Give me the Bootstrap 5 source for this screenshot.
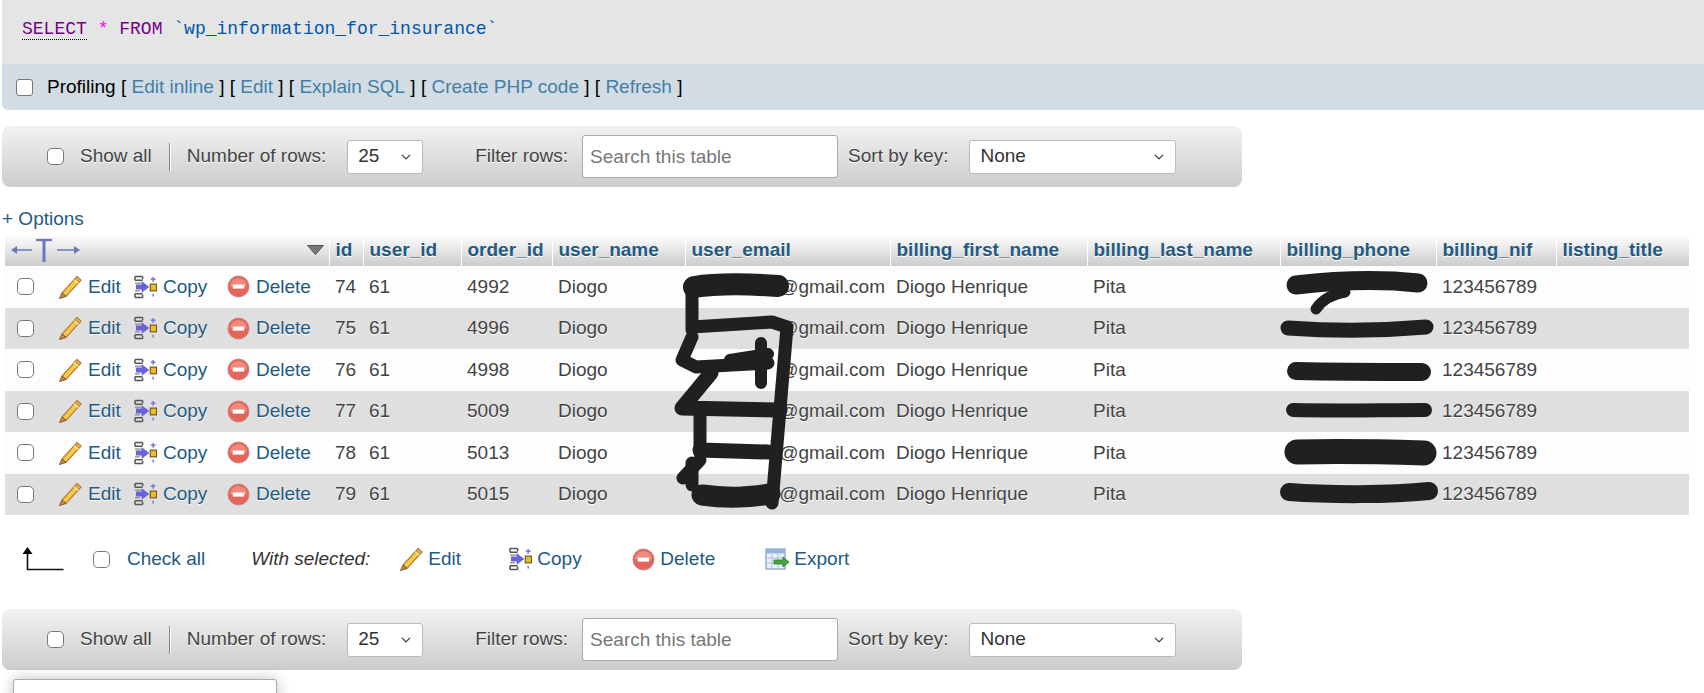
<!DOCTYPE html>
<html lang="en">
<head>
<meta charset="utf-8">
<title>wp_information_for_insurance</title>
<link href="https://cdn.jsdelivr.net/npm/bootstrap@5.3.0/dist/css/bootstrap.min.css" rel="stylesheet">
<style>
html,body{height:693px;overflow:hidden;background:#fff}
body{font-family:"Liberation Sans",Arial,sans-serif;font-size:19px;color:#444;position:relative}
a{color:#235a81;text-decoration:none}
.sqlbox{margin-left:2px;height:64px;background:#e5e5e5;padding:18px 0 0 20px;font-family:"Liberation Mono",monospace;font-size:18px;line-height:22px;color:#000}
.kw{color:#708;border-bottom:1px dotted #000}
.kw2{color:#708}.op{color:#f0f}.str{color:#05a}
.profbar{margin-left:2px;height:46px;background:#d3dce3;border-radius:0 0 0 6px;padding-left:14px;color:#000}
.profbar a{color:#3f7fa8}
.profbar .form-check-input,.chk{width:17px;height:17px;margin:0;border:1px solid #767676;border-radius:3px;flex:none}
.profbar .form-check-input{margin-right:14px}
.navbox{margin-left:2px;width:1240px;height:61px;background:linear-gradient(#f2f2f2,#ccc);border-radius:8px;color:#444;text-shadow:0 1px 0 #fff;padding-left:45px}
.first{margin-top:16px}
.second{margin-top:28px}
.sepr{width:1px;height:28px;background:#888;box-shadow:1px 0 0 #fff;margin:0 17px 0 17px}
.navbox .form-select{padding:0 0 0 10px;font-size:19px;height:34px;color:#333;border-color:#bbb;border-radius:3px;text-shadow:none;background-position:right 9px center;background-size:14px 10px}
.sel-n{width:76px;margin-left:21px}
.sel-k{width:207px;margin-left:21px}
.navbox .form-control{width:256px;height:43px;padding:0 7px;font-size:19px;margin-left:14px;border-color:#aaa;border-radius:3px;text-shadow:none}
.navbox .form-control::placeholder{color:#777}
.lbl-filter{margin-left:52px}
.lbl-sort{margin-left:10px}
.showlbl{margin-left:16px}
.optlink{margin:17px 0 0 2px;height:30px;line-height:30px;font-size:19px;display:block;color:#235a81}
.datatbl{table-layout:fixed;width:1684px;margin:0 0 0 5px;border-collapse:collapse;font-size:19px}
.datatbl th,.datatbl td{padding:0 0 0 6px;border:0;white-space:nowrap;box-shadow:none;vertical-align:middle;overflow:visible}
.datatbl th{height:32px;background:linear-gradient(#fff,#ccc);color:#235a81;font-weight:700;text-shadow:0 1px 0 #fff;border-left:1px solid #fff}
.datatbl th:first-child{border-left:0;padding:0}
.datatbl td{height:41.5px;color:#444;text-shadow:0 1px 0 #fff}
.datatbl tbody tr:nth-child(odd) td{background:#fdfdfd}
.datatbl tbody tr:nth-child(even) td{background:#dfdfdf}
.datatbl td.emailcell{text-align:right;padding-right:5px}
.datatbl td.actions{padding:0}
.w0{width:324px}.w1{width:34px}.w2{width:98px}.w3{width:91px}.w4{width:133px}.w5{width:205px}.w6{width:197px}.w7{width:193px}.w8{width:156px}.w9{width:120px}.w10{width:133px}
.acts{padding-left:12px}
.acts a{display:flex;align-items:center;gap:6px;color:#235a81}
.ic1{margin-left:24px;width:76px}
.ic2{width:93px}
.ic1 svg,.ic2 svg,.ic3 svg{flex:none}
.headwrap{display:flex;align-items:center;justify-content:space-between;padding:0 5px 0 6px}
.bulk{margin-top:22px;height:44px;padding-left:22px}
.bulkchk{margin-left:29px}
.bulk .chk{margin-right:17px}
.bulk .mute{font-style:italic;color:#333;margin-left:46px;margin-right:29px}
.bulk a{display:flex;align-items:center;gap:5px}
.checklink{color:#235a81}
.bk1{width:110px}.bk2{width:123px}.bk3{width:133px}
.consolebox{position:absolute;left:13px;top:679px;width:264px;height:40px;background:#fff;border:1px solid #aaa;border-radius:3px;box-shadow:0 0 14px rgba(0,0,0,.25)}
.scrib{position:absolute;left:0;top:0;pointer-events:none}
.scrib path{fill:none;stroke:#202020;stroke-linecap:round;stroke-linejoin:round}
</style>
</head>
<body>
<svg width="0" height="0" class="position-absolute">
<defs>
<symbol id="i-pencil" viewBox="0 0 24 24">
<path d="M19 1.5 L23 5 L8 21.5 L4 18Z" fill="#f4c94d" stroke="#b5812d" stroke-width="1.2"/>
<path d="M16.5 4.5 L20.5 8" stroke="#fbe89a" stroke-width="2.2"/>
<path d="M19 1.5 L23 5 L21 7.2 L17 3.7Z" fill="#e5a468" stroke="#b5812d" stroke-width="1"/>
<path d="M4 18 L8 21.5 L1.5 23.5Z" fill="#c98a4e" stroke="#8a5a2a" stroke-width="1"/>
</symbol>
<symbol id="i-copy" viewBox="0 0 24 24">
<path d="M1 0.5h9v23H1z" fill="#fff" opacity="0"/>
<path d="M1 1h8M1 5h8M1 19h8M1 23h8M1 1v4M1 19v4M9 1v3M9 20v3" stroke="#555" stroke-width="1.6" fill="none"/>
<path d="M1 8h7M1 16h5" stroke="#888" stroke-width="1.4"/>
<path d="M16 12 l-8 -6 v3.5 h-6 v5 h6 v3.5z" fill="#6a62d8" transform="translate(0,0)"/>
<rect x="17" y="9" width="6.5" height="7" fill="#f1b92e" stroke="#6b5a1c" stroke-width="1.2"/>
<path d="M20 1.5v5M17.5 4h5" stroke="#7a78e0" stroke-width="1.6"/>
<path d="M20 19v3" stroke="#7a78e0" stroke-width="1.6"/>
</symbol>
<symbol id="i-del" viewBox="0 0 24 24">
<circle cx="12" cy="12" r="11" fill="#e5655a" stroke="#c9887f" stroke-width="1"/>
<path d="M3 12a9 9 0 0 1 18 0z" fill="#ee8a7e"/>
<rect x="6" y="10" width="12" height="4.2" fill="#fff"/>
</symbol>
<symbol id="i-export" viewBox="0 0 24 24">
<rect x="1" y="2" width="19" height="20" fill="#eaf1f8" stroke="#7d9cc0" stroke-width="1.2"/>
<rect x="1.5" y="2.5" width="18" height="4" fill="#8fb3d9"/>
<path d="M1 11h19M1 16h19M7 7v15M13 7v15" stroke="#a8bfd8" stroke-width="1"/>
<path d="M9 13h9v-3l6 5 -6 5v-3H9z" fill="#4aa33c" stroke="#2f7a28" stroke-width=".8"/>
</symbol>
</defs>
</svg>

<div class="sqlbox"><span class="kw">SELECT</span> <span class="op">*</span> <span class="kw2">FROM</span> <span class="str">`wp_information_for_insurance`</span></div>
<div class="profbar d-flex align-items-center">
<input class="form-check-input" type="checkbox" aria-label="Profiling">
<span>Profiling [&nbsp;<a href="#">Edit inline</a>&nbsp;] [&nbsp;<a href="#">Edit</a>&nbsp;] [&nbsp;<a href="#">Explain SQL</a>&nbsp;] [&nbsp;<a href="#">Create PHP code</a>&nbsp;] [&nbsp;<a href="#">Refresh</a>&nbsp;]</span>
</div>

<div class="navbox first d-flex align-items-center">
<input class="form-check-input chk m-0" type="checkbox" aria-label="Show all"><span class="showlbl">Show all</span>
<span class="sepr"></span>
<span>Number of rows:</span>
<select class="form-select sel-n" aria-label="Rows"><option>25</option></select>
<span class="lbl-filter">Filter rows:</span>
<input class="form-control" type="text" placeholder="Search this table">
<span class="lbl-sort">Sort by key:</span>
<select class="form-select sel-k" aria-label="Sort"><option>None</option></select>
</div>

<a class="optlink" href="#">+ Options</a>

<table class="table datatbl">
<colgroup><col class="w0"><col class="w1"><col class="w2"><col class="w3"><col class="w4"><col class="w5"><col class="w6"><col class="w7"><col class="w8"><col class="w9"><col class="w10"></colgroup>
<thead><tr>
<th><div class="headwrap">
<svg width="72" height="26" viewBox="0 0 72 26"><g stroke="#6c77bb" fill="#6c77bb"><path d="M3 13H21" stroke-width="1.5"/><path d="M0 13l6-4v8z" stroke="none"/><path d="M33 4V25" stroke-width="3"/><path d="M25 3H41" stroke-width="2.4"/><path d="M46 13H65" stroke-width="1.5"/><path d="M69 13l-6-4v8z" stroke="none"/></g></svg>
<svg width="17" height="10" viewBox="0 0 17 10"><path d="M0.5 0.5H16.5L8.5 9.5Z" fill="#777" stroke="#555"/></svg>
</div></th>
<th>id</th><th>user_id</th><th>order_id</th><th>user_name</th><th>user_email</th><th>billing_first_name</th><th>billing_last_name</th><th>billing_phone</th><th>billing_nif</th><th>listing_title</th>
</tr></thead>
<tbody>
<tr><td class="actions"><div class="acts d-flex align-items-center"><input class="form-check-input chk" type="checkbox" aria-label="Row"><a class="ic1" href="#"><svg width="24" height="24"><use href="#i-pencil"/></svg>Edit</a><a class="ic2" href="#"><svg width="23" height="24"><use href="#i-copy"/></svg>Copy</a><a class="ic3" href="#"><svg width="23" height="23"><use href="#i-del"/></svg>Delete</a></div></td><td>74</td><td>61</td><td>4992</td><td>Diogo</td><td class="emailcell">@gmail.com</td><td>Diogo Henrique</td><td>Pita</td><td></td><td>123456789</td><td></td></tr>
<tr><td class="actions"><div class="acts d-flex align-items-center"><input class="form-check-input chk" type="checkbox" aria-label="Row"><a class="ic1" href="#"><svg width="24" height="24"><use href="#i-pencil"/></svg>Edit</a><a class="ic2" href="#"><svg width="23" height="24"><use href="#i-copy"/></svg>Copy</a><a class="ic3" href="#"><svg width="23" height="23"><use href="#i-del"/></svg>Delete</a></div></td><td>75</td><td>61</td><td>4996</td><td>Diogo</td><td class="emailcell">@gmail.com</td><td>Diogo Henrique</td><td>Pita</td><td></td><td>123456789</td><td></td></tr>
<tr><td class="actions"><div class="acts d-flex align-items-center"><input class="form-check-input chk" type="checkbox" aria-label="Row"><a class="ic1" href="#"><svg width="24" height="24"><use href="#i-pencil"/></svg>Edit</a><a class="ic2" href="#"><svg width="23" height="24"><use href="#i-copy"/></svg>Copy</a><a class="ic3" href="#"><svg width="23" height="23"><use href="#i-del"/></svg>Delete</a></div></td><td>76</td><td>61</td><td>4998</td><td>Diogo</td><td class="emailcell">@gmail.com</td><td>Diogo Henrique</td><td>Pita</td><td></td><td>123456789</td><td></td></tr>
<tr><td class="actions"><div class="acts d-flex align-items-center"><input class="form-check-input chk" type="checkbox" aria-label="Row"><a class="ic1" href="#"><svg width="24" height="24"><use href="#i-pencil"/></svg>Edit</a><a class="ic2" href="#"><svg width="23" height="24"><use href="#i-copy"/></svg>Copy</a><a class="ic3" href="#"><svg width="23" height="23"><use href="#i-del"/></svg>Delete</a></div></td><td>77</td><td>61</td><td>5009</td><td>Diogo</td><td class="emailcell">@gmail.com</td><td>Diogo Henrique</td><td>Pita</td><td></td><td>123456789</td><td></td></tr>
<tr><td class="actions"><div class="acts d-flex align-items-center"><input class="form-check-input chk" type="checkbox" aria-label="Row"><a class="ic1" href="#"><svg width="24" height="24"><use href="#i-pencil"/></svg>Edit</a><a class="ic2" href="#"><svg width="23" height="24"><use href="#i-copy"/></svg>Copy</a><a class="ic3" href="#"><svg width="23" height="23"><use href="#i-del"/></svg>Delete</a></div></td><td>78</td><td>61</td><td>5013</td><td>Diogo</td><td class="emailcell">@gmail.com</td><td>Diogo Henrique</td><td>Pita</td><td></td><td>123456789</td><td></td></tr>
<tr><td class="actions"><div class="acts d-flex align-items-center"><input class="form-check-input chk" type="checkbox" aria-label="Row"><a class="ic1" href="#"><svg width="24" height="24"><use href="#i-pencil"/></svg>Edit</a><a class="ic2" href="#"><svg width="23" height="24"><use href="#i-copy"/></svg>Copy</a><a class="ic3" href="#"><svg width="23" height="23"><use href="#i-del"/></svg>Delete</a></div></td><td>79</td><td>61</td><td>5015</td><td>Diogo</td><td class="emailcell">@gmail.com</td><td>Diogo Henrique</td><td>Pita</td><td></td><td>123456789</td><td></td></tr>
</tbody>
</table>

<div class="bulk d-flex align-items-center">
<svg width="42" height="24" viewBox="0 0 42 24"><path d="M5.5 6V22.5H41.5" fill="none" stroke="#111" stroke-width="1.6"/><path d="M5.5 0L10.5 7H0.5Z" fill="#000"/></svg>
<input class="form-check-input chk bulkchk" type="checkbox" aria-label="Check all">
<a class="checklink" href="#">Check all</a>
<span class="mute">With selected:</span>
<a class="bk1" href="#"><svg width="24" height="24"><use href="#i-pencil"/></svg>Edit</a>
<a class="bk2" href="#"><svg width="23" height="24"><use href="#i-copy"/></svg>Copy</a>
<a class="bk3" href="#"><svg width="23" height="23"><use href="#i-del"/></svg>Delete</a>
<a href="#"><svg width="24" height="24"><use href="#i-export"/></svg>Export</a>
</div>

<div class="navbox second d-flex align-items-center">
<input class="form-check-input chk m-0" type="checkbox" aria-label="Show all"><span class="showlbl">Show all</span>
<span class="sepr"></span>
<span>Number of rows:</span>
<select class="form-select sel-n" aria-label="Rows"><option>25</option></select>
<span class="lbl-filter">Filter rows:</span>
<input class="form-control" type="text" placeholder="Search this table">
<span class="lbl-sort">Sort by key:</span>
<select class="form-select sel-k" aria-label="Sort"><option>None</option></select>
</div>

<div class="consolebox"></div>

<svg class="scrib" width="1704" height="693" viewBox="0 0 1704 693" aria-hidden="true">
<path stroke-width="22" d="M694 287C720 283 750 284 778 286"/>
<path stroke-width="13" d="M692 287V330M692 327L772 322L787 327M787 327L772 503"/>
<path stroke-width="13" d="M692 337L682 360L696 367L768 363"/>
<path stroke-width="12" d="M730 360L768 354M761 343V383"/>
<path stroke-width="15" d="M711 373L682 408L780 410"/>
<path stroke-width="13" d="M700 417V453M683 478L700 460"/>
<path stroke-width="15" d="M700 450L768 452"/>
<path stroke-width="21" d="M702 495C730 499 750 497 770 494"/>
<path stroke-width="13" d="M692 463V485"/>
<path stroke-width="19" d="M1296 285C1340 280 1380 279 1418 283"/>
<path stroke-width="11" d="M1316 309C1322 300 1330 295 1345 292"/>
<path stroke-width="15" d="M1288 328C1330 331 1380 331 1426 327"/>
<path stroke-width="18" d="M1296 371C1340 372 1380 372 1422 372"/>
<path stroke-width="14" d="M1293 410C1340 411 1380 410 1425 410"/>
<path stroke-width="25" d="M1297 452C1340 451 1390 452 1424 453"/>
<path stroke-width="18" d="M1289 492C1330 495 1390 495 1429 491"/>
</svg>

<script src="https://cdn.jsdelivr.net/npm/bootstrap@5.3.0/dist/js/bootstrap.bundle.min.js"></script>
</body>
</html>
